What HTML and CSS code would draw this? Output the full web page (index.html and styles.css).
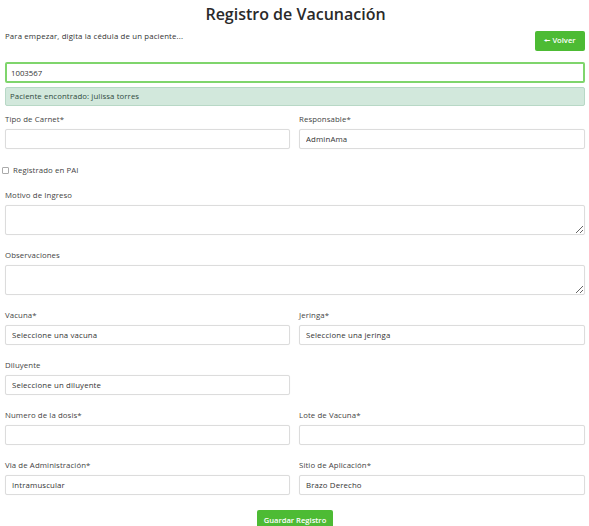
FILE: index.html
```html
<!DOCTYPE html>
<html lang="es">
<head>
<meta charset="utf-8">
<title>Registro de Vacunación</title>
<link rel="stylesheet" href="styles.css">
</head>
<body>
<main class="page">
  <h1 class="title">Registro de Vacunación</h1>
  <div class="intro">
    <p class="hint">Para empezar, digita la cédula de un paciente...</p>
    <button class="btn btn-back" type="button"><span class="arrow">&#129044;</span> Volver</button>
  </div>
  <input class="search" type="text" value="1003567">
  <div class="alert">Paciente encontrado: julissa torres</div>

  <div class="grid">
    <div class="field">
      <label class="label">Tipo de Carnet*</label>
      <input class="control" type="text">
    </div>
    <div class="field">
      <label class="label">Responsable*</label>
      <input class="control" type="text" value="AdminAma">
    </div>
  </div>

  <label class="check"><input type="checkbox" class="box"> Registrado en PAI</label>

  <div class="field">
    <label class="label">Motivo de Ingreso</label>
    <textarea class="control area"></textarea>
  </div>
  <div class="field">
    <label class="label">Observaciones</label>
    <textarea class="control area"></textarea>
  </div>

  <div class="grid grid-tight">
    <div class="field">
      <label class="label">Vacuna*</label>
      <input class="control" type="text" value="Seleccione una vacuna">
    </div>
    <div class="field">
      <label class="label">Jeringa*</label>
      <input class="control" type="text" value="Seleccione una jeringa">
    </div>
    <div class="field">
      <label class="label">Diluyente</label>
      <input class="control" type="text" value="Seleccione un diluyente">
    </div>
    <div class="field"></div>
    <div class="field">
      <label class="label">Numero de la dosis*</label>
      <input class="control" type="text">
    </div>
    <div class="field">
      <label class="label">Lote de Vacuna*</label>
      <input class="control" type="text">
    </div>
    <div class="field">
      <label class="label">Via de Administración*</label>
      <input class="control" type="text" value="Intramuscular">
    </div>
    <div class="field">
      <label class="label">Sitio de Aplicación*</label>
      <input class="control" type="text" value="Brazo Derecho">
    </div>
  </div>

  <div class="actions">
    <button class="btn btn-save" type="button">Guardar Registro</button>
  </div>
</main>
</body>
</html>
```

FILE: styles.css
```css
* { box-sizing: border-box; }
html, body { margin: 0; padding: 0; background: #fff; }
body {
  font-family: "Open Sans", "DejaVu Sans", sans-serif;
  color: #444;
  overflow: hidden;
}
.page {
  width: 589px;
  padding: 0 4px 0 5px;
}
.title {
  margin: 0;
  height: 28px;
  line-height: 28px;
  text-align: center;
  font-size: 16px;
  font-weight: 600;
  color: #2a2a2a;
  padding-left: 1px;
}
.intro {
  display: flex;
  justify-content: space-between;
  align-items: flex-start;
  margin-top: 3px;
}
.hint {
  margin: 0;
  font-size: 7.8px;
  letter-spacing: 0.15px;
  line-height: 10px;
  color: #333;
}
.btn {
  font-family: inherit;
  border: none;
  border-radius: 2px;
  background: #4dbb34;
  color: #fff;
  font-weight: 600;
  cursor: pointer;
}
.btn-back {
  width: 50px;
  height: 20px;
  font-size: 7.6px;
  padding: 0;
}
.arrow { font-size: 7px; }
.search {
  display: block;
  width: 100%;
  height: 21px;
  margin-top: 11px;
  border: 2px solid #7fd56c;
  border-radius: 2px;
  padding: 0 4px;
  font-family: inherit;
  font-size: 7.8px;
  color: #333;
  outline: none;
}
.alert {
  margin-top: 4px;
  height: 19px;
  line-height: 17px;
  padding: 0 4px;
  background: #d2e8dc;
  border: 1px solid #b8d8c6;
  border-radius: 2px;
  font-size: 7.8px;
  letter-spacing: 0.1px;
  color: #2f4a3c;
}
.grid {
  display: grid;
  grid-template-columns: 285px 286px;
  column-gap: 9px;
  margin-top: 7px;
}
.grid-tight { margin-top: 0; }
.field { margin-bottom: 14px; }
.label {
  display: block;
  height: 12px;
  line-height: 12px;
  margin-bottom: 4px;
  font-size: 7.8px;
  letter-spacing: 0.1px;
  color: #444;
}
.control {
  display: block;
  width: 100%;
  height: 20px;
  border: 1px solid #dcdcdc;
  border-radius: 2px;
  box-shadow: 0 0 1px rgba(0,0,0,0.08);
  padding: 0 6px;
  font-family: inherit;
  font-size: 7.8px;
  letter-spacing: 0.15px;
  color: #333;
  background: #fff;
  outline: none;
}
.area {
  height: 30px;
  resize: vertical;
  padding: 4px 6px;
}
.check {
  display: flex;
  align-items: center;
  height: 14px;
  margin-bottom: 12px;
  margin-left: -3px;
  font-size: 7.8px;
  letter-spacing: 0.1px;
  color: #444;
}
.box {
  appearance: none;
  -webkit-appearance: none;
  width: 7px;
  height: 7px;
  margin: 0 4px 0 0;
  border: 1px solid #aaa;
  border-radius: 1px;
  background: #fff;
}
.actions {
  display: flex;
  justify-content: center;
  margin-top: 1px;
}
.btn-save {
  width: 76px;
  height: 20px;
  font-size: 7.6px;
  padding: 0;
}
```
